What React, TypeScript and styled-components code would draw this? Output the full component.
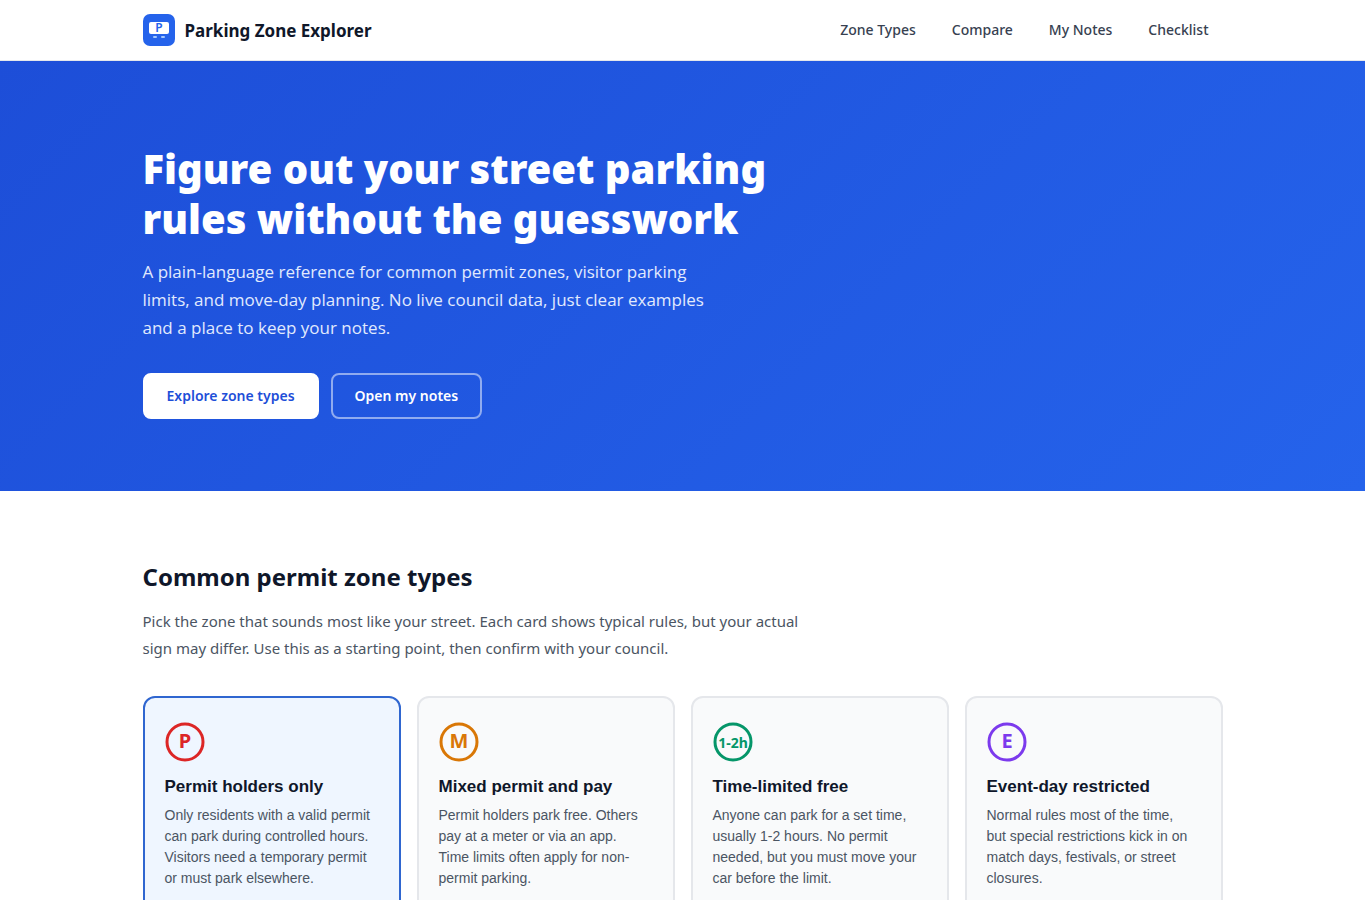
import React, { useState } from "react";
import styled, { createGlobalStyle, css } from "styled-components";

const GlobalStyle = createGlobalStyle`
  *, *::before, *::after { box-sizing: border-box; }
  body {
    margin: 0;
    background: #ffffff;
    color: #0f172a;
    font-family: "Segoe UI", "Noto Sans", "Open Sans", sans-serif;
  }
  h1, h2, p { margin: 0; }
`;

const Container = styled.div`
  width: 100%;
  max-width: 1120px;
  margin: 0 auto;
  padding: 0 20px;
`;

const Header = styled.header`
  background: #ffffff;
  border-bottom: 1px solid #e5e7eb;
`;

const HeaderRow = styled(Container)`
  display: flex;
  align-items: center;
  justify-content: space-between;
  height: 60px;
`;

const Brand = styled.a`
  display: flex;
  align-items: center;
  gap: 10px;
  color: #0f172a;
  font-size: 17px;
  font-weight: 700;
  text-decoration: none;
`;

const Nav = styled.nav`
  display: flex;
  gap: 8px;
`;

const NavLink = styled.a`
  padding: 8px 14px;
  color: #374151;
  font-size: 14px;
  font-weight: 500;
  line-height: 20px;
  text-decoration: none;
`;

const Hero = styled.section`
  padding: 83px 0 72px;
  background: linear-gradient(135deg, #1d4ed8 0%, #2563eb 100%);
  color: #ffffff;
`;

const HeroTitle = styled.h1`
  max-width: 680px;
  margin-bottom: 14px;
  font-size: 40px;
  font-weight: 900;
  line-height: 50px;
`;

const HeroText = styled.p`
  max-width: 580px;
  margin-bottom: 31px;
  color: #e1eafd;
  font-family: "Segoe UI", "Open Sans", sans-serif;
  font-size: 17px;
  line-height: 28px;
`;

const Actions = styled.div`
  display: flex;
  flex-wrap: wrap;
  gap: 12px;
`;

const ActionLink = styled.a<{ $outline?: boolean }>`
  padding: 11px 22px;
  border: 2px solid #ffffff;
  border-radius: 8px;
  background: #ffffff;
  color: #1d4ed8;
  font-size: 14px;
  font-weight: 600;
  line-height: 20px;
  text-decoration: none;
  ${(p) =>
    p.$outline &&
    css`
      border-color: rgba(255, 255, 255, 0.5);
      background: transparent;
      color: #ffffff;
    `}
`;

const Section = styled.section`
  padding: 66px 0;
`;

const SectionTitle = styled.h2`
  margin-bottom: 11px;
  font-size: 24px;
  font-weight: 700;
  line-height: 40px;
`;

const SectionText = styled.p`
  max-width: 680px;
  margin-bottom: 34px;
  color: #4b5563;
  font-size: 15px;
  line-height: 27px;
`;

const Cards = styled.div`
  display: grid;
  grid-template-columns: repeat(auto-fit, minmax(240px, 1fr));
  gap: 16px;
`;

const Card = styled.button`
  display: flex;
  flex-direction: column;
  align-items: flex-start;
  padding: 24px 20px;
  border: 2px solid #e5e7eb;
  border-radius: 12px;
  background: #f9fafb;
  color: #0f172a;
  font-family: "Liberation Sans", Arial, sans-serif;
  text-align: left;
  cursor: pointer;
  &[aria-pressed="true"] {
    border-color: #2f66d0;
    background: #eff6ff;
  }
`;

const CardTitle = styled.span`
  margin: 15px 0 8px;
  font-size: 17px;
  font-weight: 700;
  line-height: 20px;
`;

const CardText = styled.span`
  padding-right: 6px;
  color: #4b5563;
  font-size: 14px;
  line-height: 21px;
`;

const Badge = styled.svg`
  display: block;
  font-family: "Segoe UI", "Noto Sans", "Open Sans", sans-serif;
  font-weight: 700;
`;

const zones = [
  { mark: "P", color: "#dc2626", name: "Permit holders only", text: "Only residents with a valid permit can park during controlled hours. Visitors need a temporary permit or must park elsewhere." },
  { mark: "M", color: "#d97706", name: "Mixed permit and pay", text: "Permit holders park free. Others pay at a meter or via an app. Time limits often apply for non-permit parking." },
  { mark: "1-2h", color: "#059669", name: "Time-limited free", text: "Anyone can park for a set time, usually 1-2 hours. No permit needed, but you must move your car before the limit." },
  { mark: "E", color: "#7c3aed", name: "Event-day restricted", text: "Normal rules most of the time, but special restrictions kick in on match days, festivals, or street closures." },
];

function Logo() {
  return (
    <svg width="32" height="32" viewBox="0 0 32 32" aria-hidden="true">
      <rect width="32" height="32" rx="7" fill="#2563eb" />
      <rect x="6" y="8" width="20" height="12" rx="2" fill="#ffffff" />
      <text x="16" y="18" textAnchor="middle" fontSize="12" fontWeight="600" fill="#2563eb">P</text>
      <rect x="10" y="22" width="4" height="2" rx="1" fill="#a5c8fd" />
      <rect x="18" y="22" width="4" height="2" rx="1" fill="#a5c8fd" />
    </svg>
  );
}

function ZoneBadge({ mark, color }: { mark: string; color: string }) {
  const small = mark.length > 1;
  return (
    <Badge width="40" height="40" viewBox="0 0 40 40" aria-hidden="true">
      <circle cx="20" cy="20" r="18" fill="none" stroke={color} strokeWidth="3" />
      <text x="20" y="26" textAnchor="middle" fontSize={small ? 14 : 20} fill={color}>{mark}</text>
    </Badge>
  );
}

export default function App() {
  const [selected, setSelected] = useState(0);
  return (
    <>
      <GlobalStyle />
      <Header>
        <HeaderRow>
          <Brand href="#top">
            <Logo />
            Parking Zone Explorer
          </Brand>
          <Nav>
            <NavLink href="#zones">Zone Types</NavLink>
            <NavLink href="#compare">Compare</NavLink>
            <NavLink href="#notes">My Notes</NavLink>
            <NavLink href="#checklist">Checklist</NavLink>
          </Nav>
        </HeaderRow>
      </Header>
      <main>
        <Hero id="top">
          <Container>
            <HeroTitle>Figure out your street parking rules without the guesswork</HeroTitle>
            <HeroText>
              A plain-language reference for common permit zones, visitor parking limits, and
              move-day planning. No live council data, just clear examples and a place to keep your
              notes.
            </HeroText>
            <Actions>
              <ActionLink href="#zones">Explore zone types</ActionLink>
              <ActionLink href="#notes" $outline>Open my notes</ActionLink>
            </Actions>
          </Container>
        </Hero>
        <Section id="zones">
          <Container>
            <SectionTitle>Common permit zone types</SectionTitle>
            <SectionText>
              Pick the zone that sounds most like your street. Each card shows typical rules, but
              your actual sign may differ. Use this as a starting point, then confirm with your
              council.
            </SectionText>
            <Cards>
              {zones.map((zone, i) => (
                <Card key={zone.name} type="button" aria-pressed={i === selected} onClick={() => setSelected(i)}>
                  <ZoneBadge mark={zone.mark} color={zone.color} />
                  <CardTitle>{zone.name}</CardTitle>
                  <CardText>{zone.text}</CardText>
                </Card>
              ))}
            </Cards>
          </Container>
        </Section>
      </main>
    </>
  );
}
